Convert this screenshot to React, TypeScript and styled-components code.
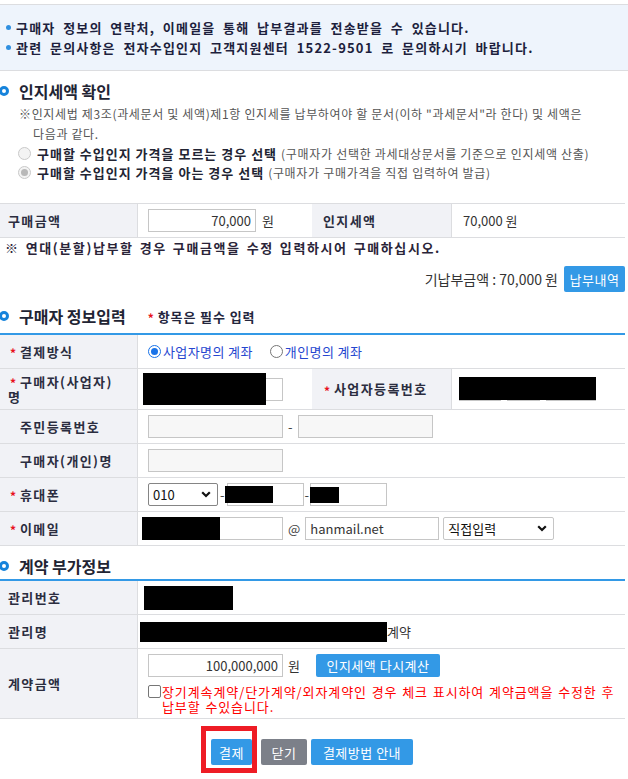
import React from 'react';
import styled, { createGlobalStyle, css } from 'styled-components';

const GlobalStyle = createGlobalStyle`
  html, body { margin: 0; padding: 0; background: #fff; }
  body { font-family: "Noto Sans CJK KR", "Noto Sans", sans-serif; color: #333; font-size: 13px; }
  *, *::before, *::after { box-sizing: border-box; }
`;

const Page = styled.div`
  width: 628px;
  padding-top: 4px;
  padding-bottom: 12px;
`;

const NoticeBox = styled.div`
  height: 67px;
  background: #eef4fc;
  border-top: 1px solid #dcdde0;
  border-bottom: 1px solid #dcdde0;
  padding: 12px 0 0 6px;
`;

const NoticeLine = styled.div`
  display: flex;
  align-items: center;
  height: 20px;
  font-size: 13px;
  font-weight: 700;
  letter-spacing: 1.2px;
  word-spacing: 3.5px;
  color: #1d1f3d;
  white-space: nowrap;
  &::before {
    content: '';
    width: 5px;
    height: 5px;
    border-radius: 50%;
    background: #2f8fe0;
    margin-right: 5px;
    flex: none;
  }
`;

const SectionHead = styled.div<{ $mt: number }>`
  display: flex;
  align-items: center;
  height: 18px;
  margin-top: ${p => p.$mt}px;
  white-space: nowrap;
`;

const Ring = styled.span`
  width: 10px;
  height: 10px;
  border: 3px solid #1683db;
  border-radius: 50%;
  margin-left: -1px;
  margin-right: 10px;
  flex: none;
`;

const SectionTitle = styled.span`
  font-size: 16px;
  font-weight: 700;
  color: #222433;
`;

const Required = styled.span`
  margin-left: 20px;
  font-size: 13px;
  font-weight: 700;
  color: #24263d;
  letter-spacing: 0.9px;
`;

const Star = styled.span<{ $hidden?: boolean }>`
  display: inline-block;
  width: 12px;
  padding-left: 2px;
  color: #e8101e;
  font-size: 12px;
  font-weight: 700;
  letter-spacing: 0;
  line-height: 12px;
  vertical-align: middle;
  visibility: ${p => (p.$hidden ? 'hidden' : 'visible')};
`;

const Notes = styled.div`
  margin-top: 4px;
  padding-left: 19px;
  font-size: 12px;
  letter-spacing: 0.65px;
  color: #555;
  line-height: 20px;
`;

const NoteLine = styled.div<{ $indent?: boolean }>`
  white-space: nowrap;
  padding-left: ${p => (p.$indent ? 14 : 0)}px;
`;

const ChoiceRow = styled.div`
  display: flex;
  align-items: center;
  height: 19px;
  padding-left: 18px;
  white-space: nowrap;
  font-size: 12px;
  letter-spacing: 0.7px;
  color: #555;
`;

const ChoiceStrong = styled.b`
  font-size: 13px;
  font-weight: 700;
  color: #222433;
  letter-spacing: 1px;
  margin: 0 4px 0 6px;
`;

const RadioDot = styled.span<{ $checked?: boolean; $disabled?: boolean }>`
  position: relative;
  width: 13px;
  height: 13px;
  border-radius: 50%;
  flex: none;
  border: 1px solid ${p => (p.$disabled ? '#c9c9c9' : p.$checked ? '#1a73e8' : '#767676')};
  background: ${p => (p.$disabled ? '#f3f3f3' : '#fff')};
  ${p =>
    p.$checked &&
    css`
      &::after {
        content: '';
        position: absolute;
        inset: 2px;
        border-radius: 50%;
        background: ${p.$disabled ? '#b8b8b8' : '#1a73e8'};
      }
    `}
`;

const Table = styled.div<{ $blue?: boolean; $mt: number }>`
  width: 625px;
  margin-top: ${p => p.$mt}px;
  border-top: ${p => (p.$blue ? '2px solid #3399e6' : '1px solid #dcdde0')};
`;

const Row = styled.div<{ $h: number; $four?: boolean }>`
  display: grid;
  grid-template-columns: ${p => (p.$four ? '138px 174px 140px 1fr' : '138px 1fr')};
  height: ${p => p.$h}px;
  border-bottom: 1px solid #dcdde0;
`;

const Th = styled.div<{ $pl?: number }>`
  background: #f1f2f6;
  border-right: 1px solid #dcdde0;
  display: flex;
  align-items: center;
  padding-left: ${p => p.$pl ?? 8}px;
  font-size: 13px;
  font-weight: 700;
  letter-spacing: 1.4px;
  color: #2b2d3f;
  line-height: 15px;
`;

const Td = styled.div<{ $pl?: number; $col?: boolean }>`
  display: flex;
  flex-direction: ${p => (p.$col ? 'column' : 'row')};
  align-items: ${p => (p.$col ? 'flex-start' : 'center')};
  justify-content: ${p => (p.$col ? 'center' : 'flex-start')};
  padding-left: ${p => p.$pl ?? 10}px;
  font-size: 13px;
  color: #333;
  white-space: nowrap;
`;

const Field = styled.input<{ $w: number; $right?: boolean }>`
  width: ${p => p.$w}px;
  height: 23px;
  border: 1px solid #c6c6c6;
  border-radius: 0;
  padding: 0 4px;
  margin: 0;
  font-family: inherit;
  font-size: 13px;
  color: #333;
  background: #fff;
  text-align: ${p => (p.$right ? 'right' : 'left')};
  outline: none;
  &:disabled {
    background: #f7f7f7;
  }
`;

const FieldWrap = styled.span`
  position: relative;
  display: inline-flex;
`;

const Redact = styled.span<{ $l: number; $t: number; $w: number; $h: number }>`
  position: absolute;
  left: ${p => p.$l}px;
  top: ${p => p.$t}px;
  width: ${p => p.$w}px;
  height: ${p => p.$h}px;
  background: #000;
`;

const Block = styled.span<{ $w: number; $h: number }>`
  display: inline-block;
  width: ${p => p.$w}px;
  height: ${p => p.$h}px;
  background: #000;
  flex: none;
`;

const Sep = styled.span<{ $m: number }>`
  margin: 0 ${p => p.$m}px;
  color: #444;
  font-size: 13px;
`;

const Unit = styled.span<{ $ml?: number }>`
  margin-left: ${p => p.$ml ?? 5}px;
  font-size: 13px;
  color: #333;
`;

const SelectBox = styled.div<{ $w: number; $dark?: boolean }>`
  width: ${p => p.$w}px;
  height: 23px;
  border: 1px solid ${p => (p.$dark ? '#858585' : '#c6c6c6')};
  border-radius: 2px;
  display: flex;
  align-items: center;
  justify-content: space-between;
  padding: 0 6px 0 4px;
  font-size: 13px;
  color: #111;
  background: #fff;
  flex: none;
`;

const RadioOption = styled.span<{ $ml?: number }>`
  display: inline-flex;
  align-items: center;
  margin-left: ${p => p.$ml ?? 0}px;
  color: #2546cf;
  font-size: 13px;
  letter-spacing: 0.4px;
  gap: 2px;
`;

const MiniBox = styled.span<{ $w: number }>`
  width: ${p => p.$w}px;
  height: 23px;
  border: 1px solid #c6c6c6;
  flex: none;
`;

const MiniGroup = styled.span`
  position: relative;
  display: inline-flex;
  gap: 6px;
`;

const Btn = styled.button<{ $w: number; $gray?: boolean; $h?: number; $ml?: number }>`
  width: ${p => p.$w}px;
  height: ${p => p.$h ?? 26}px;
  margin-left: ${p => p.$ml ?? 0}px;
  border: none;
  border-radius: 2px;
  background: ${p => (p.$gray ? '#7c8089' : '#3399e6')};
  color: #fff;
  font-family: inherit;
  font-size: 13px;
  letter-spacing: 0.5px;
  padding: 0;
  flex: none;
`;

const PayNote = styled.div`
  height: 20px;
  line-height: 20px;
  padding-left: 5px;
  font-size: 13px;
  font-weight: 700;
  letter-spacing: 1.6px;
  word-spacing: 1.5px;
  color: #2a2438;
  white-space: nowrap;
`;

const PaidRow = styled.div`
  width: 625px;
  margin-top: 8px;
  display: flex;
  justify-content: flex-end;
  align-items: center;
  gap: 6px;
  font-size: 14px;
  color: #333;
`;

const Line = styled.div`
  display: flex;
  align-items: center;
`;

const CheckBox = styled.span`
  width: 13px;
  height: 13px;
  border: 1px solid #767676;
  border-radius: 2px;
  background: #fff;
  margin: 1px 1px 0 0;
  flex: none;
`;

const RedText = styled.div`
  color: #ff0000;
  font-size: 13px;
  line-height: 15px;
  letter-spacing: 0.9px;
  word-spacing: 1px;
`;

const RedBlock = styled.div`
  display: flex;
  align-items: flex-start;
  margin-top: 7px;
`;

const Buttons = styled.div`
  display: flex;
  justify-content: center;
  align-items: center;
  gap: 4px;
  margin-top: 20px;
  padding-right: 4px;
`;

const Highlight = styled.span`
  position: relative;
  display: inline-flex;
  margin-right: 5px;
  &::after {
    content: '';
    position: absolute;
    left: -10px;
    right: -5px;
    top: -13px;
    bottom: -8px;
    border: 5px solid #ee1c25;
  }
`;

const Chevron = () => (
  <svg width="10" height="7" viewBox="0 0 10 7">
    <path d="M1.2 1.2 L5 5 L8.8 1.2" fill="none" stroke="#111" strokeWidth="2.2" />
  </svg>
);

export default function App() {
  return (
    <Page>
      <GlobalStyle />
      <NoticeBox>
        <NoticeLine>구매자 정보의 연락처, 이메일을 통해 납부결과를 전송받을 수 있습니다.</NoticeLine>
        <NoticeLine>관련 문의사항은 전자수입인지 고객지원센터 1522-9501 로 문의하시기 바랍니다.</NoticeLine>
      </NoticeBox>

      <SectionHead $mt={11}>
        <Ring />
        <SectionTitle>인지세액 확인</SectionTitle>
      </SectionHead>
      <Notes>
        <NoteLine>※인지세법 제3조(과세문서 및 세액)제1항 인지세를 납부하여야 할 문서(이하 "과세문서"라 한다) 및 세액은</NoteLine>
        <NoteLine $indent>다음과 같다.</NoteLine>
      </Notes>
      <ChoiceRow>
        <RadioDot $disabled />
        <ChoiceStrong>구매할 수입인지 가격을 모르는 경우 선택</ChoiceStrong>
        (구매자가 선택한 과세대상문서를 기준으로 인지세액 산출)
      </ChoiceRow>
      <ChoiceRow>
        <RadioDot $disabled $checked />
        <ChoiceStrong>구매할 수입인지 가격을 아는 경우 선택</ChoiceStrong>
        (구매자가 구매가격을 직접 입력하여 발급)
      </ChoiceRow>

      <Table $mt={21}>
        <Row $h={34} $four>
          <Th>구매금액</Th>
          <Td>
            <Field $w={108} $right readOnly value="70,000" />
            <Unit $ml={6}>원</Unit>
          </Td>
          <Th $pl={11}>인지세액</Th>
          <Td $pl={11}>70,000 원</Td>
        </Row>
      </Table>
      <PayNote>※ 연대(분할)납부할 경우 구매금액을 수정 입력하시어 구매하십시오.</PayNote>
      <PaidRow>
        <span>기납부금액 : 70,000 원</span>
        <Btn $w={61}>납부내역</Btn>
      </PaidRow>

      <SectionHead $mt={15}>
        <Ring />
        <SectionTitle>구매자 정보입력</SectionTitle>
        <Required>
          <Star>*</Star>항목은 필수 입력
        </Required>
      </SectionHead>
      <Table $mt={8} $blue>
        <Row $h={34}>
          <Th>
            <span>
              <Star>*</Star>결제방식
            </span>
          </Th>
          <Td>
            <RadioOption>
              <RadioDot $checked />
              사업자명의 계좌
            </RadioOption>
            <RadioOption $ml={17}>
              <RadioDot />
              개인명의 계좌
            </RadioOption>
          </Td>
        </Row>
        <Row $h={41} $four>
          <Th>
            <span>
              <Star>*</Star>구매자(사업자)
              <br />명
            </span>
          </Th>
          <Td>
            <FieldWrap>
              <Field $w={135} readOnly />
              <Redact $l={-5} $t={-5} $w={123} $h={32} />
            </FieldWrap>
          </Td>
          <Th $pl={10}>
            <span>
              <Star>*</Star>사업자등록번호
            </span>
          </Th>
          <Td $pl={7}>
            <MiniGroup>
              <MiniBox $w={42} />
              <MiniBox $w={33} />
              <MiniBox $w={50} />
              <Redact $l={0} $t={-1} $w={137} $h={23} />
            </MiniGroup>
          </Td>
        </Row>
        <Row $h={34}>
          <Th>
            <span>
              <Star $hidden>*</Star>주민등록번호
            </span>
          </Th>
          <Td>
            <Field $w={135} disabled />
            <Sep $m={5}>-</Sep>
            <Field $w={135} disabled />
          </Td>
        </Row>
        <Row $h={34}>
          <Th>
            <span>
              <Star $hidden>*</Star>구매자(개인)명
            </span>
          </Th>
          <Td>
            <Field $w={135} disabled />
          </Td>
        </Row>
        <Row $h={34}>
          <Th>
            <span>
              <Star>*</Star>휴대폰
            </span>
          </Th>
          <Td>
            <SelectBox $w={70} $dark>
              010
              <Chevron />
            </SelectBox>
            <Sep $m={2}>-</Sep>
            <FieldWrap>
              <Field $w={77} readOnly />
              <Redact $l={-2} $t={3} $w={48} $h={17} />
            </FieldWrap>
            <Sep $m={1}>-</Sep>
            <FieldWrap>
              <Field $w={77} readOnly />
              <Redact $l={0} $t={4} $w={29} $h={16} />
            </FieldWrap>
          </Td>
        </Row>
        <Row $h={34}>
          <Th>
            <span>
              <Star>*</Star>이메일
            </span>
          </Th>
          <Td>
            <FieldWrap>
              <Field $w={135} readOnly />
              <Redact $l={-6} $t={0} $w={78} $h={23} />
            </FieldWrap>
            <Sep $m={5}>@</Sep>
            <Field $w={134} readOnly value="hanmail.net" />
            <Sep $m={2} />
            <SelectBox $w={111}>
              직접입력
              <Chevron />
            </SelectBox>
          </Td>
        </Row>
      </Table>

      <SectionHead $mt={11}>
        <Ring />
        <SectionTitle>계약 부가정보</SectionTitle>
      </SectionHead>
      <Table $mt={4} $blue>
        <Row $h={34}>
          <Th>관리번호</Th>
          <Td $pl={6}>
            <Block $w={89} $h={24} />
          </Td>
        </Row>
        <Row $h={34}>
          <Th>관리명</Th>
          <Td $pl={2}>
            <Block $w={247} $h={20} />
            계약
          </Td>
        </Row>
        <Row $h={70}>
          <Th>계약금액</Th>
          <Td $col>
            <Line>
              <Field $w={135} $right readOnly value="100,000,000" />
              <Unit>원</Unit>
              <Btn $w={124} $h={23} $ml={16}>
                인지세액 다시계산
              </Btn>
            </Line>
            <RedBlock>
              <CheckBox />
              <RedText>
                장기계속계약/단가계약/외자계약인 경우 체크 표시하여 계약금액을 수정한 후
                <br />
                납부할 수있습니다.
              </RedText>
            </RedBlock>
          </Td>
        </Row>
      </Table>

      <Buttons>
        <Highlight>
          <Btn $w={41}>결제</Btn>
        </Highlight>
        <Btn $w={46} $gray>
          닫기
        </Btn>
        <Btn $w={102}>결제방법 안내</Btn>
      </Buttons>
    </Page>
  );
}
